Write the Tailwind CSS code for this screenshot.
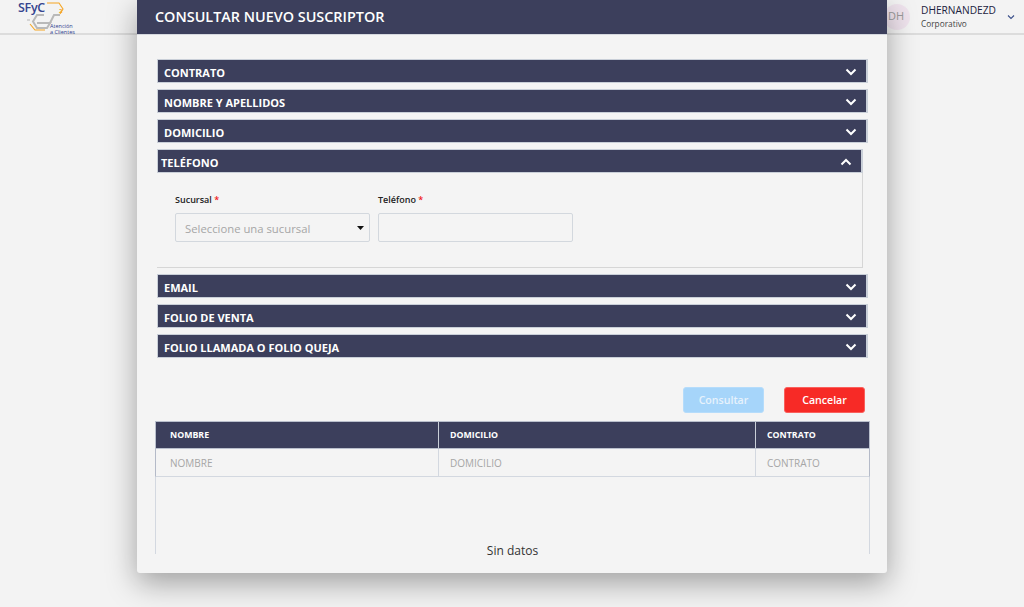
<!DOCTYPE html>
<html lang="es">
<head>
<meta charset="utf-8">
<title>Consultar nuevo suscriptor</title>
<script src="https://cdn.jsdelivr.net/npm/@tailwindcss/browser@4"></script>
</head>
<body class="m-0 bg-[#f3f3f3]">
<div class="relative w-[1024px] h-[607px] overflow-hidden bg-[#f3f3f3] font-['Open_Sans',sans-serif]">
  <header class="h-[35px] border-b-2 border-[#dcdcdc] bg-[#f3f3f3] flex justify-between">
    <div class="relative w-[90px] h-[33px]">
      <svg width="90" height="36" viewBox="0 0 90 36" class="absolute left-0 top-0" fill="none">
        <path d="M47 3H59L63 9 60 14" stroke="#f5a623" stroke-width="1.1"/>
        <path d="M27 20h3" stroke="#b5b5b5" stroke-width="1"/>
        <path d="M44 15H37L33 21.5 37 28H47L50 23H37" stroke="#b9b9b9" stroke-width="2"/>
        <path d="M47 23H50L54 15H60" stroke="#b9b9b9" stroke-width="2"/>
        <path d="M30 24 35 30H45" stroke="#f5a623" stroke-width="1.1"/>
      </svg>
      <span class="absolute left-[18px] top-[0px] text-[12.5px] leading-[15px] font-semibold tracking-[-0.3px] text-[#35448f]">SFyC</span>
      <span class="absolute left-[59px] top-[8px] text-[6px] leading-[6px] font-bold text-[#f5a623]">2</span>
      <span class="absolute left-[50px] top-[23px] text-[5.5px] leading-[6px] text-[#2f3e8f] whitespace-nowrap">Atención<br>a Clientes</span>
    </div>
    <div class="flex items-center h-[33px]">
      <div class="w-[26px] h-[26px] rounded-full bg-[#efe3ed] flex items-center justify-center pr-[2px] text-[11px] text-[#9a9a9a] mr-[11px]">DH</div>
      <div class="w-[86px]">
        <div class="text-[10.2px] leading-[13px] text-[#1c2340] whitespace-nowrap">DHERNANDEZD</div>
        <div class="text-[8.3px] leading-[13px] text-[#444] whitespace-nowrap">Corporativo</div>
      </div>
      <svg width="8" height="6" viewBox="0 0 8 6" class="mr-[9px] mt-[1px]" fill="none"><path d="M1 1.5 4 4.5 7 1.5" stroke="#3a4f8a" stroke-width="1.1"/></svg>
    </div>
  </header>

  <section class="absolute left-[137px] top-0 w-[750px] h-[573px] rounded-b-[3px] bg-[#f4f4f4] shadow-[0_10px_30px_rgba(0,0,0,0.35)] flex flex-col overflow-hidden">
    <div class="h-[35px] shrink-0 bg-[#3c3f5c] border-b border-[#d5d8de] flex items-center pl-[18px] text-[14.4px] font-semibold text-white">CONSULTAR NUEVO SUSCRIPTOR</div>

    <div class="ml-[20px] mt-[24px] w-[711px] flex flex-col gap-[6px]">
      <div class="h-[24px] bg-[#3c3f5c] border border-r-2 border-[#c9cfd8] flex items-center justify-between pt-[2px] pl-[6px] pr-[9px] text-[11px] font-bold text-white"><span class="pt-[2px]">CONTRATO</span>
        <svg width="12" height="8" viewBox="0 0 12 8" fill="none"><path d="M1.5 1.5 6 6 10.5 1.5" stroke="#fff" stroke-width="2"/></svg></div>
      <div class="h-[24px] bg-[#3c3f5c] border border-r-2 border-[#c9cfd8] flex items-center justify-between pt-[2px] pl-[6px] pr-[9px] text-[11px] font-bold text-white"><span class="pt-[2px]">NOMBRE Y APELLIDOS</span>
        <svg width="12" height="8" viewBox="0 0 12 8" fill="none"><path d="M1.5 1.5 6 6 10.5 1.5" stroke="#fff" stroke-width="2"/></svg></div>
      <div class="h-[24px] bg-[#3c3f5c] border border-r-2 border-[#c9cfd8] flex items-center justify-between pt-[2px] pl-[6px] pr-[9px] text-[11px] font-bold text-white"><span class="pt-[2px]">DOMICILIO</span>
        <svg width="12" height="8" viewBox="0 0 12 8" fill="none"><path d="M1.5 1.5 6 6 10.5 1.5" stroke="#fff" stroke-width="2"/></svg></div>

      <div class="w-[706px] h-[119px] border-r border-b border-[#d6d6d6] flex flex-col">
        <div class="h-[24px] shrink-0 -mr-px bg-[#3c3f5c] border border-r-2 border-[#c9cfd8] flex items-center justify-between pt-[2px] pl-[3px] pr-[9px] text-[11px] font-bold text-white"><span class="pt-[2px]">TELÉFONO</span>
          <svg width="12" height="8" viewBox="0 0 12 8" fill="none"><path d="M1.5 6.5 6 2 10.5 6.5" stroke="#fff" stroke-width="2"/></svg></div>
        <div class="flex gap-[8px] pl-[18px] pt-[20px]">
          <div class="w-[195px]">
            <div class="text-[9px] leading-[13px] font-semibold text-[#222]">Sucursal <span class="text-[#f01818]">*</span></div>
            <div class="mt-[7px] h-[29px] border border-[#d3d8de] rounded-[2px] flex items-center justify-between pl-[9px] pr-[5px] text-[11.3px] text-[#a6a6a6]"><span class="pt-[3px]">Seleccione una sucursal</span>
              <svg width="7" height="4" viewBox="0 0 7 4"><path d="M0 0h7L3.5 4z" fill="#111"/></svg></div>
          </div>
          <div class="w-[195px]">
            <div class="text-[9px] leading-[13px] font-semibold text-[#222]">Teléfono <span class="text-[#f01818]">*</span></div>
            <div class="mt-[7px] h-[29px] border border-[#d3d8de] rounded-[2px]"></div>
          </div>
        </div>
      </div>

      <div class="h-[24px] bg-[#3c3f5c] border border-r-2 border-[#c9cfd8] flex items-center justify-between pt-[2px] pl-[6px] pr-[9px] text-[11px] font-bold text-white"><span class="pt-[2px]">EMAIL</span>
        <svg width="12" height="8" viewBox="0 0 12 8" fill="none"><path d="M1.5 1.5 6 6 10.5 1.5" stroke="#fff" stroke-width="2"/></svg></div>
      <div class="h-[24px] bg-[#3c3f5c] border border-r-2 border-[#c9cfd8] flex items-center justify-between pt-[2px] pl-[6px] pr-[9px] text-[11px] font-bold text-white"><span class="pt-[2px]">FOLIO DE VENTA</span>
        <svg width="12" height="8" viewBox="0 0 12 8" fill="none"><path d="M1.5 1.5 6 6 10.5 1.5" stroke="#fff" stroke-width="2"/></svg></div>
      <div class="h-[24px] bg-[#3c3f5c] border border-r-2 border-[#c9cfd8] flex items-center justify-between pt-[2px] pl-[6px] pr-[9px] text-[11px] font-bold text-white"><span class="pt-[2px]">FOLIO LLAMADA O FOLIO QUEJA</span>
        <svg width="12" height="8" viewBox="0 0 12 8" fill="none"><path d="M1.5 1.5 6 6 10.5 1.5" stroke="#fff" stroke-width="2"/></svg></div>
    </div>

    <div class="mt-[29px] pr-[22px] flex justify-end gap-[20px]">
      <div class="w-[81px] h-[26px] rounded-[3px] border border-[#b5dcfb] bg-[#a6d5fa] flex items-center justify-center pt-[2px] text-[10.6px] font-semibold text-[#e6f2fc]">Consultar</div>
      <div class="w-[81px] h-[26px] rounded-[3px] border border-[#f9605c] bg-[#f72a26] flex items-center justify-center pt-[2px] text-[10.6px] font-semibold text-white">Cancelar</div>
    </div>

    <div class="ml-[18px] mt-[8px] w-[715px] h-[133px] border-l border-r border-[#d3d8e0] flex flex-col">
      <div class="h-[28px] shrink-0 -mx-px bg-[#3c3f5c] border border-[#b9bfcc] flex text-[8.8px] font-bold text-white">
        <div class="w-[283px] border-r border-[#c9cfd8] pl-[14px] pt-[2px] flex items-center">NOMBRE</div>
        <div class="w-[317px] border-r border-[#c9cfd8] pl-[11px] pt-[2px] flex items-center">DOMICILIO</div>
        <div class="flex-1 pl-[11px] pt-[2px] flex items-center">CONTRATO</div>
      </div>
      <div class="h-[28px] shrink-0 -mx-px border-l border-r border-b border-[#b4bac8] border-b-[#d3d8e0] flex text-[10px] text-[#a6a6a6]">
        <div class="w-[283px] border-r border-[#d3d8e0] pl-[14px] pt-[2px] flex items-center">NOMBRE</div>
        <div class="w-[317px] border-r border-[#d3d8e0] pl-[11px] pt-[2px] flex items-center">DOMICILIO</div>
        <div class="flex-1 pl-[11px] pt-[2px] flex items-center">CONTRATO</div>
      </div>
      <div class="flex-1 flex items-end justify-center text-[12px] leading-[14px] text-[#333] translate-y-[4px]">Sin datos</div>
    </div>
  </section>
</div>
</body>
</html>
